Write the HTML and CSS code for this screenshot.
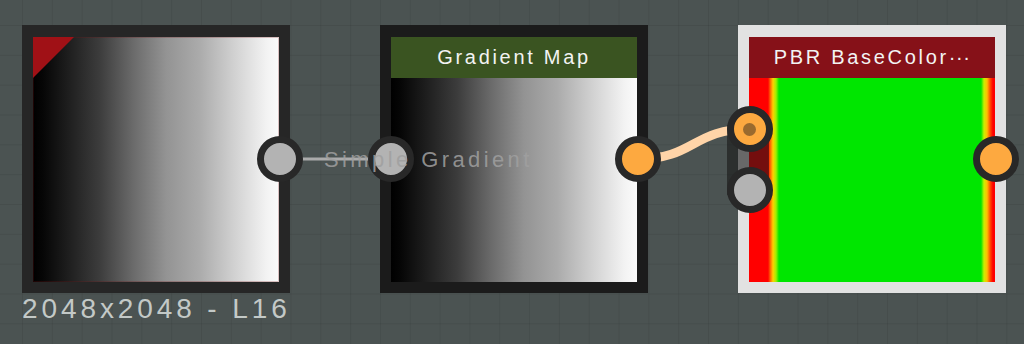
FILE: index.html
```html
<!DOCTYPE html>
<html>
<head>
<meta charset="utf-8">
<link rel="stylesheet" href="styles.css">
</head>
<body>
<div class="canvas">
  <svg class="wires" width="1024" height="344" viewBox="0 0 1024 344">
    <line x1="290" y1="159" x2="380" y2="159" stroke="#ababab" stroke-width="3"/>
    <path d="M637.5 159 C 695 159, 692 129, 749.5 129" fill="none" stroke="#ffd4a8" stroke-width="9"/>
  </svg>

  <div class="node n1">
    <div class="frame frame-dark">
      <div class="preview preview-gray preview-full"><div class="corner"></div></div>
      <span class="port port-out port-gray"></span>
    </div>
    <div class="res">2048x2048 - L16</div>
  </div>

  <div class="node n2">
    <div class="frame frame-darker">
      <div class="title title-green">Gradient Map</div>
      <div class="preview preview-gray"></div>
      <span class="port port-in port-gray"></span>
      <span class="inlabel">Simple Gradient</span>
      <span class="port port-out port-orange"></span>
    </div>
  </div>

  <div class="node n3">
    <div class="frame frame-light">
      <div class="title title-red">PBR BaseColor<span class="dots">···</span></div>
      <div class="preview preview-color"></div>
      <span class="pill"></span>
      <span class="port port-in-top port-orange port-linked"></span>
      <span class="port port-in-bottom port-gray"></span>
      <span class="port port-out port-orange"></span>
    </div>
  </div>
</div>
</body>
</html>
```

FILE: styles.css
```css
html, body {
  margin: 0;
  padding: 0;
}

body {
  width: 1024px;
  height: 344px;
  overflow: hidden;
  background-color: #4b5352;
  background-image:
    linear-gradient(to right, rgba(0, 0, 0, 0.07) 1px, transparent 1px),
    linear-gradient(to bottom, rgba(0, 0, 0, 0.07) 1px, transparent 1px);
  background-size: 29.83px 29.83px;
  background-position: 22px 25px;
  font-family: "Liberation Sans", Arial, sans-serif;
}

.canvas {
  position: relative;
  width: 1024px;
  height: 344px;
}

.wires {
  position: absolute;
  left: 0;
  top: 0;
}

.node {
  position: absolute;
  top: 25px;
  display: flex;
  flex-direction: column;
}

.n1 { left: 22px; }
.n2 { left: 380px; }
.n3 { left: 738px; }

.frame {
  position: relative;
  width: 268px;
  height: 268px;
  box-sizing: border-box;
  padding: 12px 11px 11px 11px;
  display: flex;
  flex-direction: column;
}

.frame-dark { background: #262626; }
.frame-darker { background: #1b1b1b; }
.frame-light { background: #e2e2e2; }

.title {
  height: 41px;
  line-height: 41px;
  flex: none;
  text-align: center;
  color: #f3f3f3;
  font-size: 20px;
  letter-spacing: 2.7px;
  white-space: nowrap;
  overflow: hidden;
}

.title-green { background: #3a5421; }
.title-red { background: #861118; }

.dots {
  letter-spacing: 0.5px;
}

.preview {
  flex: 1;
  position: relative;
}

.preview-gray {
  background: linear-gradient(to right,
    #000 0%, #060606 4%, #1c1c1c 13.5%, #3c3c3c 27%, #6a6a6a 40.6%,
    #939393 54%, #ababab 67.7%, #cfcfcf 81%, #f3f3f3 95%, #fbfbfb 100%);
}

.preview-full {
  box-shadow: inset 0 0 0 1px rgba(120, 20, 20, 0.25);
}

.corner {
  position: absolute;
  left: 0;
  top: 0;
  width: 41px;
  height: 41px;
  background: #a01116;
  clip-path: polygon(0 0, 100% 0, 0 100%);
}

.preview-color {
  background: linear-gradient(to right,
    #ff0000 0px, #ff0000 19px, #ff5a00 21px, #ffd000 24px, #a0f000 27px, #00e600 30px,
    #00e600 calc(100% - 14px), #c8f000 calc(100% - 11px), #ffc000 calc(100% - 8px),
    #ff5000 calc(100% - 5px), #ff0000 calc(100% - 2px), #ff0000 100%);
}

.res {
  height: 32px;
  line-height: 32px;
  font-size: 28px;
  letter-spacing: 3.9px;
  color: #c3c9c7;
  white-space: nowrap;
}

.port {
  position: absolute;
  width: 46px;
  height: 46px;
  box-sizing: border-box;
  border: 7px solid #282828;
  border-radius: 50%;
}

.port-gray { background: #b3b3b3; }
.port-orange { background: #fda940; }

.port-out { left: 234.5px; top: 111px; }
.port-in { left: -12px; top: 111px; }
.port-in-top { left: -11.5px; top: 81px; }
.port-in-bottom { left: -11.5px; top: 141.5px; }

.port-linked::after {
  content: "";
  position: absolute;
  left: 50%;
  top: 50%;
  width: 13px;
  height: 13px;
  margin: -6.5px 0 0 -6.5px;
  border-radius: 50%;
  background: #9a6a2e;
}

.pill {
  position: absolute;
  left: -11px;
  top: 100px;
  width: 42px;
  height: 70px;
  background: rgba(24, 24, 24, 0.6);
}

.inlabel {
  position: absolute;
  left: -56px;
  top: 124px;
  line-height: 22px;
  font-size: 22px;
  letter-spacing: 3.4px;
  color: rgba(160, 160, 160, 0.85);
  white-space: nowrap;
}
```
